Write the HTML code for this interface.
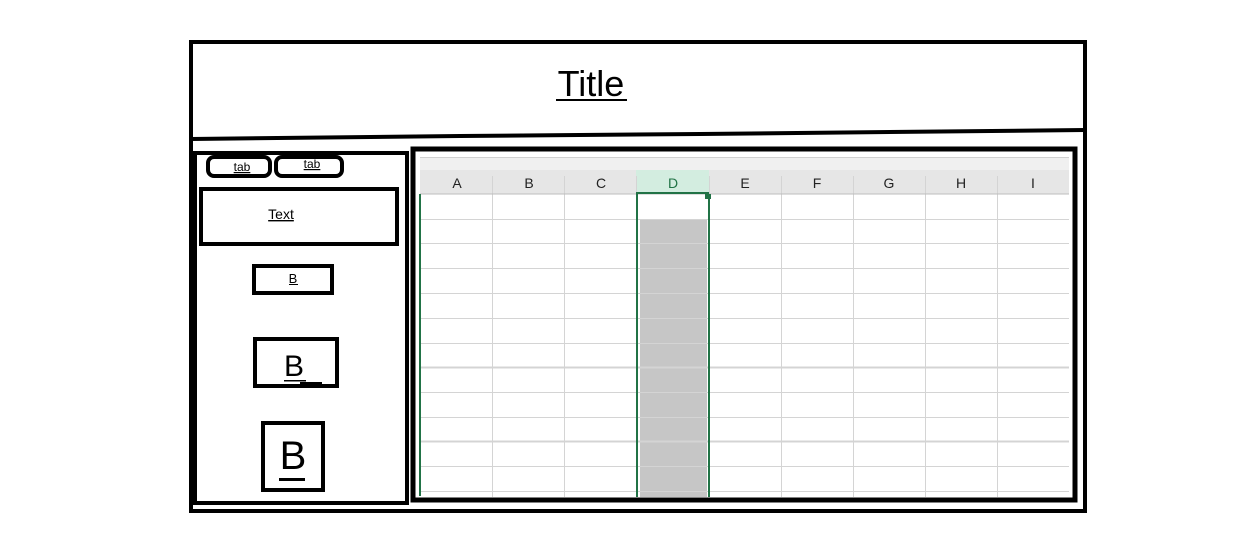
<!DOCTYPE html>
<html><head><style>body{margin:0;background:#fff}svg{display:block}</style></head><body>
<svg width="1243" height="553" xmlns="http://www.w3.org/2000/svg" font-family="Liberation Sans, sans-serif">
<rect x="191" y="42" width="894" height="469" fill="none" stroke="#000" stroke-width="4"/>
<path d="M191 139 L460 136 L700 134 L1085 130" stroke="#000" stroke-width="4" fill="none"/>
<text x="591" y="96" font-size="36" text-anchor="middle">Title</text>
<rect x="556" y="99" width="71" height="2" fill="#000"/>
<!-- left panel -->
<rect x="195" y="153" width="212" height="350" fill="none" stroke="#000" stroke-width="4"/>
<rect x="208" y="157" width="62" height="19" rx="6" fill="none" stroke="#000" stroke-width="4"/>
<rect x="276" y="157" width="66" height="19" rx="6" fill="none" stroke="#000" stroke-width="4"/>
<text x="242" y="171" font-size="12" text-anchor="middle" text-decoration="underline">tab</text>
<text x="312" y="168" font-size="12" text-anchor="middle" text-decoration="underline">tab</text>
<rect x="201" y="189" width="196" height="55" fill="none" stroke="#000" stroke-width="4"/>
<text x="281" y="219" font-size="14" text-anchor="middle" text-decoration="underline">Text</text>
<rect x="254" y="266" width="78" height="27" fill="none" stroke="#000" stroke-width="4"/>
<text x="293" y="283" font-size="13" text-anchor="middle">B</text>
<rect x="289" y="284" width="9" height="1" fill="#000"/>
<rect x="255" y="339" width="82" height="47" fill="none" stroke="#000" stroke-width="4"/>
<text x="294" y="376" font-size="30" text-anchor="middle">B</text>
<rect x="284" y="380" width="22" height="1.5" fill="#000"/>
<rect x="300" y="382" width="22" height="2" fill="#000"/>
<rect x="263" y="423" width="60" height="67" fill="none" stroke="#000" stroke-width="4"/>
<text x="293" y="469" font-size="40" text-anchor="middle">B</text>
<rect x="279" y="478" width="26" height="3" fill="#000"/>
<!-- right panel -->
<rect x="413" y="149" width="662" height="351" fill="none" stroke="#000" stroke-width="5"/>
<rect x="420" y="157" width="649" height="13" fill="#f0f0f0"/>
<rect x="420" y="157" width="649" height="1" fill="#d0d0d0"/>
<rect x="420" y="170" width="649" height="24" fill="#e6e6e6"/>
<rect x="636" y="170" width="73" height="24" fill="#d3ede0"/>
<rect x="640" y="219" width="67" height="278" fill="#c6c6c6"/>
<g stroke="#d4d4d4" stroke-width="1">
<line x1="420" y1="219.5" x2="1069" y2="219.5"/><line x1="420" y1="243.5" x2="1069" y2="243.5"/>
<line x1="420" y1="268.5" x2="1069" y2="268.5"/><line x1="420" y1="293.5" x2="1069" y2="293.5"/>
<line x1="420" y1="318.5" x2="1069" y2="318.5"/><line x1="420" y1="343.5" x2="1069" y2="343.5"/>
<line x1="420" y1="367.5" x2="1069" y2="367.5" stroke-width="2"/><line x1="420" y1="392.5" x2="1069" y2="392.5"/>
<line x1="420" y1="417.5" x2="1069" y2="417.5"/><line x1="420" y1="441.5" x2="1069" y2="441.5" stroke-width="2"/>
<line x1="420" y1="466.5" x2="1069" y2="466.5"/><line x1="420" y1="491.5" x2="1069" y2="491.5"/>
<line x1="492.5" y1="176" x2="492.5" y2="497"/><line x1="564.5" y1="176" x2="564.5" y2="497"/>
<line x1="636.5" y1="176" x2="636.5" y2="497"/><line x1="709.5" y1="176" x2="709.5" y2="497"/>
<line x1="781.5" y1="176" x2="781.5" y2="497"/><line x1="853.5" y1="176" x2="853.5" y2="497"/>
<line x1="925.5" y1="176" x2="925.5" y2="497"/><line x1="997.5" y1="176" x2="997.5" y2="497"/>
</g>
<line x1="420" y1="194" x2="1069" y2="194" stroke="#bdbdbd"/>
<rect x="419" y="194" width="2" height="302" fill="#217346"/>
<rect x="636" y="193" width="2" height="304" fill="#217346"/>
<rect x="708" y="199" width="2" height="298" fill="#217346"/>
<rect x="636" y="192" width="73" height="2" fill="#217346"/>
<rect x="705" y="194" width="6" height="5" fill="#217346"/>
<g font-size="14" text-anchor="middle" fill="#222">
<text x="457" y="188">A</text><text x="529" y="188">B</text><text x="601" y="188">C</text>
<text x="673" y="188" fill="#217346">D</text><text x="745" y="188">E</text><text x="817" y="188">F</text>
<text x="889" y="188">G</text><text x="961" y="188">H</text><text x="1033" y="188">I</text>
</g>
</svg>
</body></html>
